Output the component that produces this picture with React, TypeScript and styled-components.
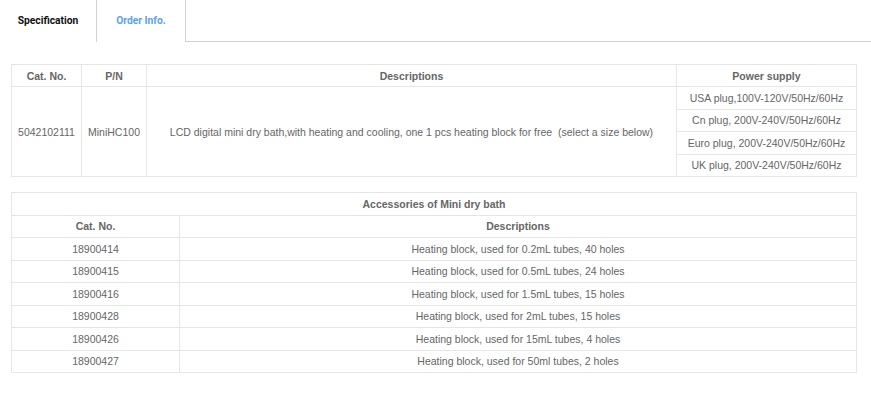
import React from "react";
import styled, { createGlobalStyle } from "styled-components";

const Global = createGlobalStyle`
  html, body { margin: 0; padding: 0; background: #fff; }
  body { font-family: "Liberation Sans", Arial, sans-serif; }
`;

const Page = styled.div`
  width: 871px;
`;

const TabBar = styled.div`
  display: flex;
  height: 41px;
  border-bottom: 1px solid #d2d2d2;
`;

const Tab = styled.div<{ $active?: boolean; $width: number }>`
  box-sizing: border-box;
  width: ${(p) => p.$width}px;
  height: 42px;
  display: flex;
  align-items: center;
  justify-content: center;
  padding-bottom: 2px;
  font-family: Roboto, "Liberation Sans", sans-serif;
  font-weight: 700;
  font-size: 10.3px;
  color: ${(p) => (p.$active ? "#5aa2f2" : "#111")};
  background: #fff;
  border-left: ${(p) => (p.$active ? "1px solid #d2d2d2" : "none")};
  border-right: ${(p) => (p.$active ? "1px solid #d2d2d2" : "none")};
  position: relative;
  z-index: ${(p) => (p.$active ? 1 : 0)};
`;

const Content = styled.div`
  padding: 22px 15px 0 11px;
  display: flex;
  flex-direction: column;
  gap: 15px;
`;

const Table = styled.table`
  width: 845px;
  border-collapse: collapse;
  table-layout: fixed;
  font-size: 10.5px;
  color: #666;
`;

const Th = styled.th<{ $h?: number }>`
  border: 1px solid #e6e6e6;
  height: ${(p) => p.$h ?? 21.5}px;
  padding: 0;
  font-weight: 700;
  text-align: center;
  vertical-align: middle;
  color: #666;
`;

const Td = styled.td`
  border: 1px solid #e6e6e6;
  height: 21.5px;
  padding: 0 4px;
  text-align: center;
  vertical-align: middle;
  white-space: nowrap;
`;

const powers = [
  "USA plug,100V-120V/50Hz/60Hz",
  "Cn plug, 200V-240V/50Hz/60Hz",
  "Euro plug, 200V-240V/50Hz/60Hz",
  "UK plug, 200V-240V/50Hz/60Hz",
];

const accessories = [
  ["18900414", "Heating block, used for 0.2mL tubes, 40 holes"],
  ["18900415", "Heating block, used for 0.5mL tubes, 24 holes"],
  ["18900416", "Heating block, used for 1.5mL tubes, 15 holes"],
  ["18900428", "Heating block, used for 2mL tubes, 15 holes"],
  ["18900426", "Heating block, used for 15mL tubes, 4 holes"],
  ["18900427", "Heating block, used for 50ml tubes, 2 holes"],
];

export default function App() {
  return (
    <Page>
      <Global />
      <TabBar>
        <Tab $width={96}>Specification</Tab>
        <Tab $width={90} $active>
          Order Info.
        </Tab>
      </TabBar>
      <Content>
        <Table>
          <colgroup>
            <col style={{ width: 70 }} />
            <col style={{ width: 65 }} />
            <col style={{ width: 530 }} />
            <col style={{ width: 180 }} />
          </colgroup>
          <thead>
            <tr>
              <Th $h={21}>Cat. No.</Th>
              <Th $h={21}>P/N</Th>
              <Th $h={21}>Descriptions</Th>
              <Th $h={21}>Power supply</Th>
            </tr>
          </thead>
          <tbody>
            {powers.map((p, i) => (
              <tr key={p}>
                {i === 0 && (
                  <>
                    <Td rowSpan={4}>5042102111</Td>
                    <Td rowSpan={4}>MiniHC100</Td>
                    <Td rowSpan={4}>
                      LCD digital mini dry bath,with heating and cooling, one 1 pcs heating block for free&nbsp; (select a size below)
                    </Td>
                  </>
                )}
                <Td>{p}</Td>
              </tr>
            ))}
          </tbody>
        </Table>
        <Table>
          <colgroup>
            <col style={{ width: 168 }} />
            <col style={{ width: 677 }} />
          </colgroup>
          <thead>
            <tr>
              <Th colSpan={2}>Accessories of Mini dry bath</Th>
            </tr>
            <tr>
              <Th>Cat. No.</Th>
              <Th>Descriptions</Th>
            </tr>
          </thead>
          <tbody>
            {accessories.map(([cat, desc]) => (
              <tr key={cat}>
                <Td>{cat}</Td>
                <Td>{desc}</Td>
              </tr>
            ))}
          </tbody>
        </Table>
      </Content>
    </Page>
  );
}
